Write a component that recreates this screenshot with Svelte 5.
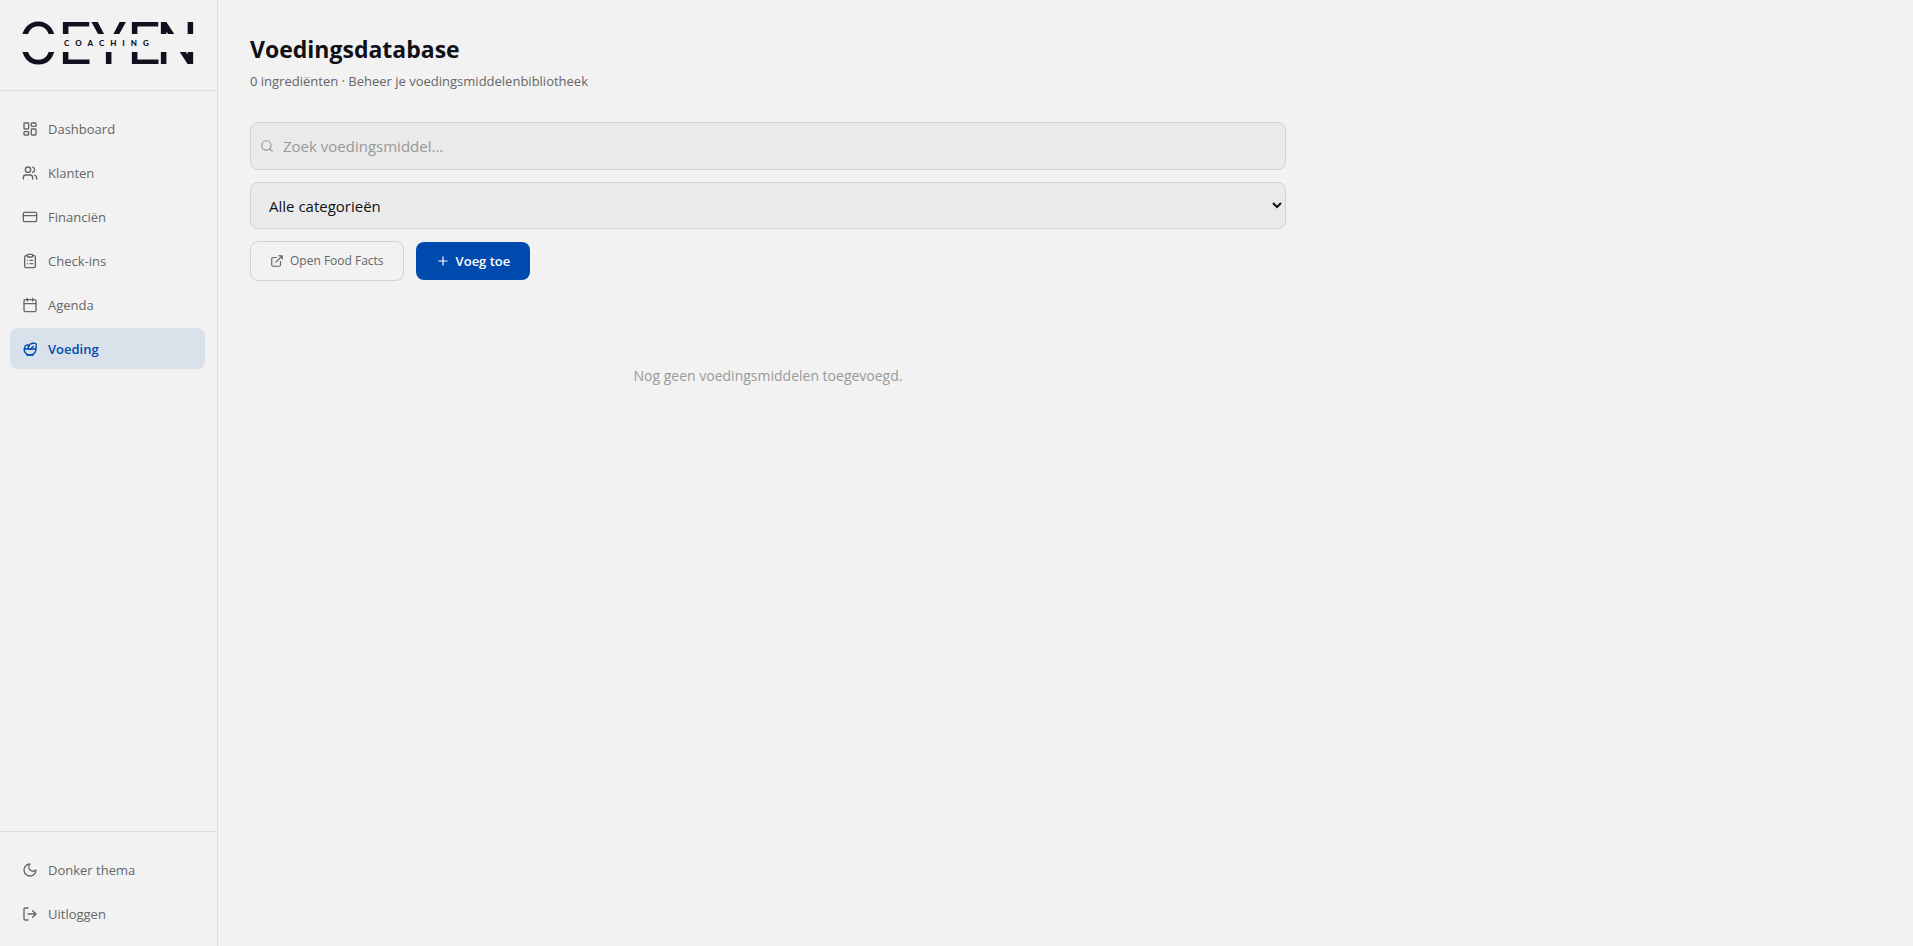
<script>
    let query = $state('')
    let category = $state('')
    let active = $state('Voeding')

    const categories = ['Groenten', 'Fruit', 'Vlees & vis', 'Zuivel', 'Granen', 'Overig']

    const nav = ['Dashboard', 'Klanten', 'Financiën', 'Check-ins', 'Agenda', 'Voeding']
    const actions = ['Donker thema', 'Uitloggen']

    const go = (e, name) => {
        e.preventDefault()
        active = name
    }
</script>

{#snippet icon(name)}
    <svg class="icon" viewBox="0 0 24 24" aria-hidden="true">
        {#if name === 'Dashboard'}
            <rect x="3" y="3" width="7" height="9" rx="1" />
            <rect x="14" y="3" width="7" height="5" rx="1" />
            <rect x="14" y="12" width="7" height="9" rx="1" />
            <rect x="3" y="16" width="7" height="5" rx="1" />
        {:else if name === 'Klanten'}
            <path d="M16 21v-2a4 4 0 0 0-4-4H6a4 4 0 0 0-4 4v2" />
            <circle cx="9" cy="7" r="4" />
            <path d="M22 21v-2a4 4 0 0 0-3-3.87" />
            <path d="M16 3.13a4 4 0 0 1 0 7.75" />
        {:else if name === 'Financiën'}
            <rect x="2" y="5" width="20" height="14" rx="2" />
            <path d="M2 10h20" />
        {:else if name === 'Check-ins'}
            <rect x="8" y="2" width="8" height="4" rx="1" />
            <path d="M16 4h2a2 2 0 0 1 2 2v14a2 2 0 0 1-2 2H6a2 2 0 0 1-2-2V6a2 2 0 0 1 2-2h2" />
            <path d="M12 11h4M12 16h4M8 11h.01M8 16h.01" />
        {:else if name === 'Agenda'}
            <path d="M8 2v4M16 2v4" />
            <rect x="3" y="4" width="18" height="18" rx="2" />
            <path d="M3 10h18" />
        {:else if name === 'Voeding'}
            <path d="M7 21h10" />
            <path d="M12 21a9 9 0 0 0 9-9H3a9 9 0 0 0 9 9Z" />
            <path d="M11.38 12a2.4 2.4 0 0 1-.4-4.77 2.4 2.4 0 0 1 3.2-2.77 2.4 2.4 0 0 1 3.47-.63 2.4 2.4 0 0 1 3.37 3.37 2.4 2.4 0 0 1-1.1 3.7 2.51 2.51 0 0 1 .03 1.1" />
            <path d="m13 12 4-4" />
            <path d="M10.9 7.25A3.99 3.99 0 0 0 4 10c0 .73.2 1.41.54 2" />
        {:else if name === 'Donker thema'}
            <path d="M12 3a6 6 0 0 0 9 9 9 9 0 1 1-9-9Z" />
        {:else if name === 'Uitloggen'}
            <path d="M9 21H5a2 2 0 0 1-2-2V5a2 2 0 0 1 2-2h4" />
            <path d="m16 17 5-5-5-5M21 12H9" />
        {:else if name === 'search'}
            <circle cx="11" cy="11" r="8" />
            <path d="m21 21-4.3-4.3" />
        {:else if name === 'external'}
            <path d="M15 3h6v6M10 14 21 3" />
            <path d="M18 13v6a2 2 0 0 1-2 2H5a2 2 0 0 1-2-2V8a2 2 0 0 1 2-2h6" />
        {:else if name === 'plus'}
            <path d="M5 12h14M12 5v14" />
        {/if}
    </svg>
{/snippet}

<div class="app">
    <aside>
        <div class="brand">
            <!-- the name is cut in two bands, with the subtitle between them -->
            <svg class="logo" viewBox="0 0 176 44" role="img" aria-label="Oeyen Coaching">
                <clipPath id="bands">
                    <rect width="176" height="13" />
                    <rect y="31" width="176" height="13" />
                </clipPath>
                <text class="name" x="-2 38 71 107 136" y="43" clip-path="url(#bands)">OEYEN</text>
                <text class="sub" x="44" y="25">COACHING</text>
            </svg>
        </div>

        <nav>
            {#each nav as name}
                <a href="#{name.toLowerCase()}" class="item" class:active={active === name} onclick={e => go(e, name)}>
                    {@render icon(name)}
                    {name}
                </a>
            {/each}
        </nav>

        <div class="actions">
            {#each actions as name}
                <button class="item">
                    {@render icon(name)}
                    {name}
                </button>
            {/each}
        </div>
    </aside>

    <main>
        <div class="content">
            <h1>Voedingsdatabase</h1>
            <p class="subtitle">0 ingrediënten · Beheer je voedingsmiddelenbibliotheek</p>

            <div class="filters">
                <label class="search">
                    {@render icon('search')}
                    <input type="text" aria-label="Zoek voedingsmiddel" placeholder="Zoek voedingsmiddel..." bind:value={query} />
                </label>

                <select aria-label="Categorie" bind:value={category}>
                    <option value="">Alle categorieën</option>
                    {#each categories as c}
                        <option value={c}>{c}</option>
                    {/each}
                </select>

                <div class="buttons">
                    <button class="outline">{@render icon('external')} Open Food Facts</button>
                    <button class="primary">{@render icon('plus')} Voeg toe</button>
                </div>
            </div>

            <p class="empty">Nog geen voedingsmiddelen toegevoegd.</p>
        </div>
    </main>
</div>

<style>
    :global(body) {
        background: #f2f2f2;
    }

    .app {
        display: flex;
        min-height: 100vh;
        color: #0f1115;
        font-family: "Open Sans", "Noto Sans", sans-serif;
        font-size: 13px;
        line-height: 20px;
    }

    aside {
        display: flex;
        flex-direction: column;
        flex: none;
        box-sizing: border-box;
        width: 218px;
        border-right: 1px solid #dedede;
    }

    .brand {
        padding: 21px 20px 25px;
        border-bottom: 1px solid #dedede;
    }

    .logo {
        display: block;
        width: 176px;
        height: 44px;
        fill: #12101f;
        overflow: visible;
    }

    .name {
        font-family: Roboto, sans-serif;
        font-size: 59px;
    }

    .sub {
        font-family: Lato, sans-serif;
        font-size: 8px;
        font-weight: 900;
        letter-spacing: 6px;
    }

    nav,
    .actions {
        display: flex;
        flex-direction: column;
        gap: 3px;
        padding: 17px 12px 12px 10px;
    }

    nav {
        flex: 1;
    }

    .actions {
        border-top: 1px solid #dedede;
    }

    button {
        margin: 0;
        font: inherit;
        cursor: pointer;
    }

    .item {
        display: flex;
        align-items: center;
        gap: 10px;
        box-sizing: border-box;
        height: 41px;
        padding: 0 12px;
        border: 0;
        border-radius: 8px;
        background: none;
        color: #666;
        text-decoration: none;
    }

    .item.active {
        background: #d9e1ea;
        color: #004aad;
        font-weight: 600;
    }

    .icon {
        flex: none;
        width: 16px;
        height: 16px;
        fill: none;
        stroke: currentColor;
        stroke-width: 2;
        stroke-linecap: round;
        stroke-linejoin: round;
    }

    main {
        flex: 1;
        padding: 32px;
    }

    .content {
        max-width: 1036px;
    }

    h1 {
        margin: 0;
        font-size: 23px;
        font-weight: 700;
        line-height: 34px;
    }

    .subtitle {
        margin: 5px 0 31px;
        color: #666;
    }

    .filters {
        display: flex;
        flex-direction: column;
        gap: 12px;
    }

    .search {
        display: flex;
        align-items: center;
        gap: 9px;
        box-sizing: border-box;
        height: 48px;
        padding: 0 9px;
        border: 1px solid #d2d2d2;
        border-radius: 8px;
        background: #eaeaea;
        color: #999;
    }

    .search .icon,
    .buttons .icon {
        width: 14px;
        height: 14px;
    }

    input {
        flex: 1;
        min-width: 0;
        padding: 0;
        border: 0;
        outline: 0;
        background: none;
        color: #0f1115;
        font: inherit;
        font-size: 15px;
    }

    input::placeholder {
        color: #999;
    }

    select {
        height: 47px;
        padding: 0 0 0 14px;
        border: 1px solid #d2d2d2;
        border-radius: 8px;
        background: #eaeaea;
        color: #0f1115;
        font: inherit;
        font-size: 15px;
    }

    .buttons {
        display: flex;
        align-items: center;
        gap: 12px;
    }

    .buttons button {
        display: flex;
        align-items: center;
        gap: 6px;
        border-radius: 8px;
    }

    .outline {
        height: 40px;
        padding: 0 19px;
        border: 1px solid #d2d2d2;
        background: none;
        color: #666;
        font-size: 12px;
    }

    .primary {
        height: 38px;
        padding: 0 20px;
        border: 0;
        background: #004aad;
        color: #fff;
        font-weight: 600;
    }

    .empty {
        margin: 85px 0 0;
        color: #999;
        font-size: 14px;
        text-align: center;
    }
</style>
